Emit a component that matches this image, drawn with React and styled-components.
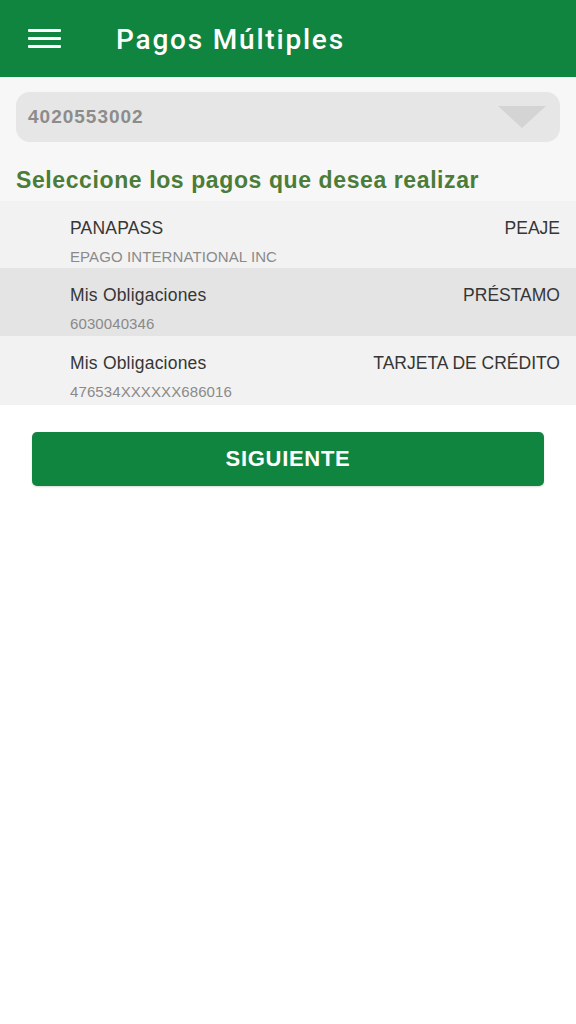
import React from "react";
import styled, { createGlobalStyle } from "styled-components";

const GlobalStyle = createGlobalStyle`
  html, body {
    margin: 0;
    padding: 0;
    background: #ffffff;
    font-family: "Liberation Sans", Arial, sans-serif;
  }
`;

const Screen = styled.div`
  width: 576px;
  min-height: 1024px;
  background: #ffffff;
`;

const AppBar = styled.header`
  height: 77px;
  background: #10853f;
  display: flex;
  align-items: center;
  padding-left: 28px;
  gap: 55px;
`;

const MenuButton = styled.div`
  width: 33px;
  display: flex;
  flex-direction: column;
  gap: 5px;
  margin-top: -1px;
  span {
    display: block;
    height: 3px;
    background: #ffffff;
    border-radius: 1px;
  }
`;

const Title = styled.h1`
  margin: 2px 0 0;
  color: #ffffff;
  font-family: Roboto, "Liberation Sans", Arial, sans-serif;
  font-size: 28px;
  font-weight: 500;
  letter-spacing: 1.8px;
  line-height: 32px;
`;

const Top = styled.section`
  background: #f7f7f7;
  padding: 15px 16px 8px;
`;

const Select = styled.div`
  height: 50px;
  border-radius: 14px;
  background: #e6e6e6;
  display: flex;
  align-items: center;
  justify-content: space-between;
  padding: 0 14px 0 12px;
`;

const SelectValue = styled.span`
  color: #8c8c8c;
  font-size: 19px;
  font-weight: 700;
  letter-spacing: 1px;
`;

const Caret = styled.span`
  width: 0;
  height: 0;
  border-left: 24px solid transparent;
  border-right: 24px solid transparent;
  border-top: 22px solid #d4d4d4;
`;

const Heading = styled.h2`
  margin: 25px 0 0;
  color: #4b7c38;
  font-size: 23px;
  line-height: 26px;
  font-weight: 700;
  letter-spacing: 0.6px;
`;

const List = styled.ul`
  list-style: none;
  margin: 0;
  padding: 0;
`;

const Row = styled.li`
  height: ${(p) => p.$h}px;
  box-sizing: border-box;
  background: ${(p) => (p.$selected ? "#e4e4e4" : "#f2f2f2")};
  padding: 17px 16px 0 70px;
  display: grid;
  grid-template-columns: 1fr auto;
  grid-template-rows: 20px 18px;
  row-gap: 10px;
`;

const Name = styled.span`
  color: #363636;
  font-size: 17.5px;
  line-height: 20px;
  letter-spacing: 0.2px;
`;

const Kind = styled.span`
  color: #363636;
  font-size: 17.5px;
  line-height: 20px;
  text-align: right;
`;

const Detail = styled.span`
  grid-column: 1 / 3;
  color: #8a8a8a;
  font-size: 15px;
  line-height: 18px;
  letter-spacing: 0.1px;
`;

const Footer = styled.div`
  padding: 27px 32px;
`;

const Button = styled.button`
  display: block;
  width: 100%;
  height: 54px;
  border: none;
  border-radius: 5px;
  background: #10853f;
  color: #ffffff;
  font-family: "Liberation Sans", Arial, sans-serif;
  font-size: 22px;
  font-weight: 700;
  letter-spacing: 0.7px;
  box-shadow: 0 1px 2px rgba(0, 0, 0, 0.15);
`;

const payments = [
  { name: "PANAPASS", kind: "PEAJE", detail: "EPAGO INTERNATIONAL INC", h: 67 },
  { name: "Mis Obligaciones", kind: "PRÉSTAMO", detail: "6030040346", selected: true, h: 68 },
  { name: "Mis Obligaciones", kind: "TARJETA DE CRÉDITO", detail: "476534XXXXXX686016", h: 69 },
];

export default function App() {
  return (
    <Screen>
      <GlobalStyle />
      <AppBar>
        <MenuButton>
          <span />
          <span />
          <span />
        </MenuButton>
        <Title>Pagos Múltiples</Title>
      </AppBar>
      <Top>
        <Select>
          <SelectValue>4020553002</SelectValue>
          <Caret />
        </Select>
        <Heading>Seleccione los pagos que desea realizar</Heading>
      </Top>
      <List>
        {payments.map((p, i) => (
          <Row key={i} $selected={p.selected} $h={p.h}>
            <Name>{p.name}</Name>
            <Kind>{p.kind}</Kind>
            <Detail>{p.detail}</Detail>
          </Row>
        ))}
      </List>
      <Footer>
        <Button>SIGUIENTE</Button>
      </Footer>
    </Screen>
  );
}
